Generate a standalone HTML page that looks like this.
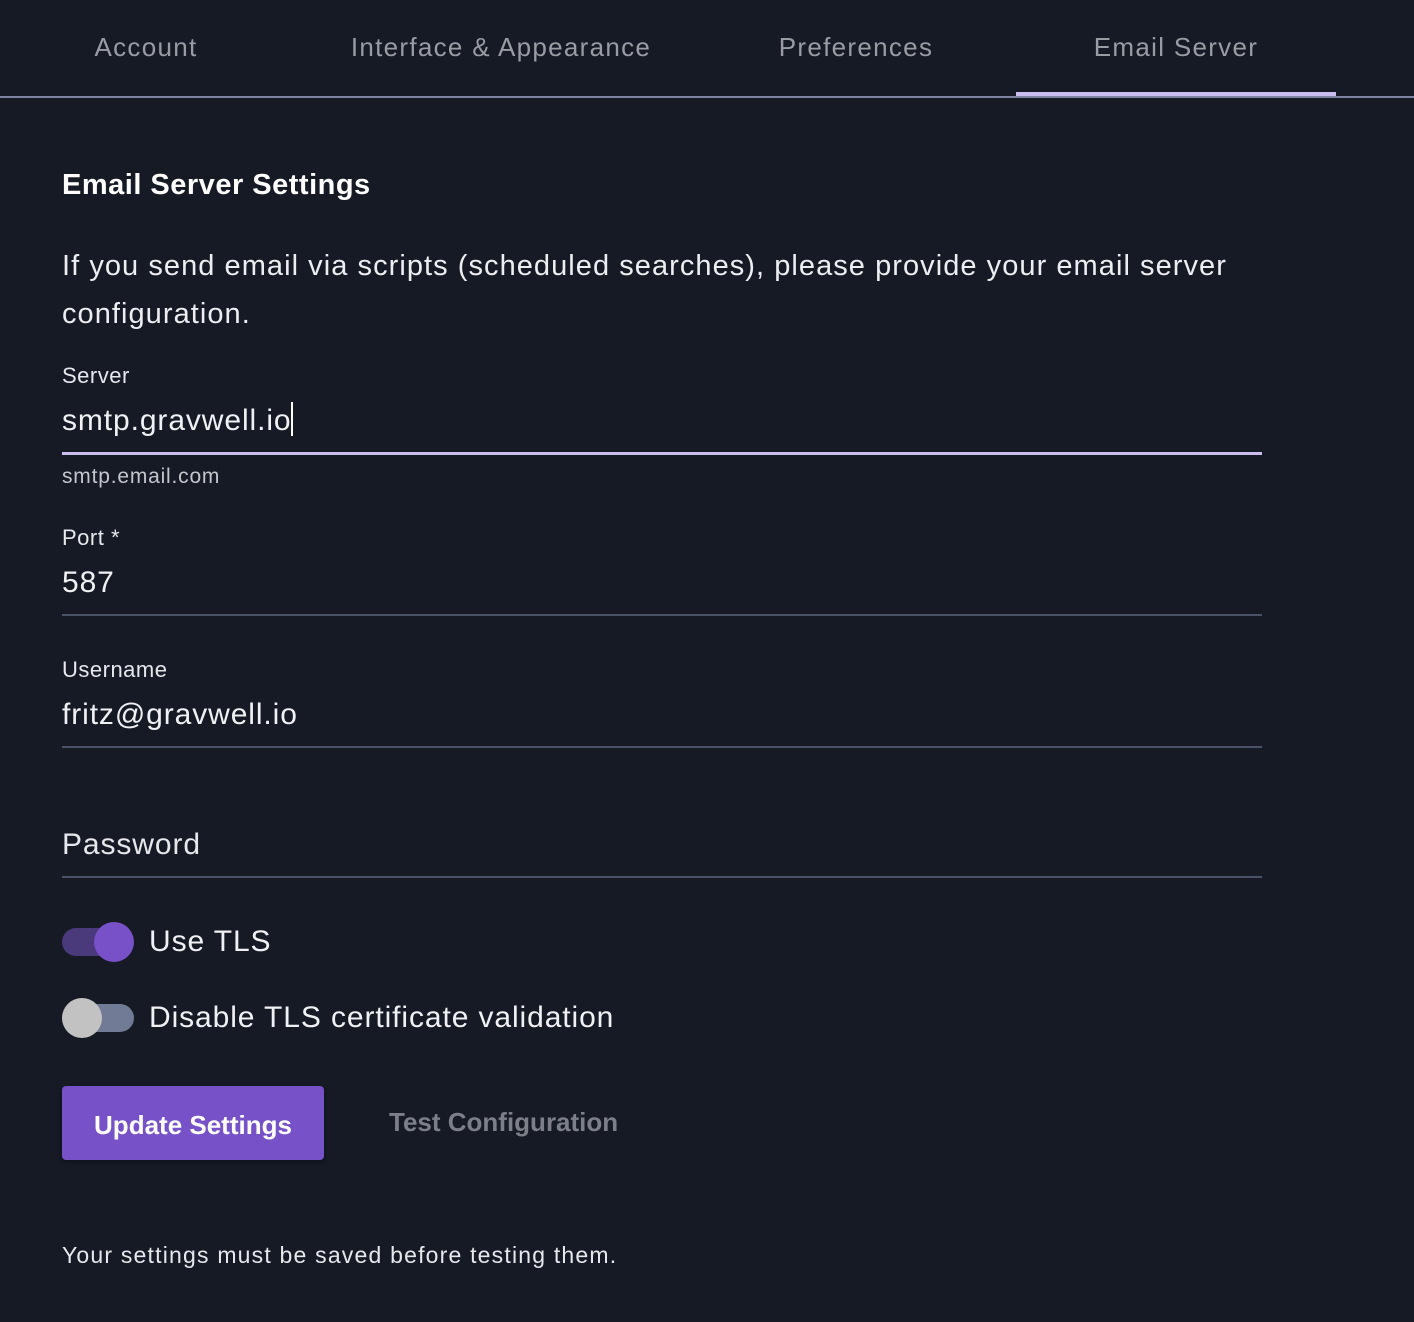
<!DOCTYPE html>
<html><head><meta charset="utf-8"><style>
*{margin:0;padding:0;box-sizing:border-box}
body{width:1414px;height:1322px;background:#151a25;font-family:"Liberation Sans",sans-serif;color:#eceef2;position:relative;overflow:hidden}
.a{position:absolute;white-space:nowrap}
.tab{top:32px;font-size:26px;color:#9a9ca3;transform:translateX(-50%);letter-spacing:1.3px}
.line{position:absolute;left:62px;width:1200px;height:2px;background:#4a5266}
.lab{font-size:22px;color:#e6e8ec;letter-spacing:0.5px}
.val{font-size:30px;color:#f0f1f4;letter-spacing:0.9px}
</style></head><body>
<div class="a tab" style="left:146px">Account</div>
<div class="a tab" style="left:501px">Interface &amp; Appearance</div>
<div class="a tab" style="left:856px">Preferences</div>
<div class="a tab" style="left:1176px">Email Server</div>
<div class="a" style="left:0;top:96px;width:1414px;height:2px;background:#7c85a0"></div>
<div class="a" style="left:1016px;top:92px;width:320px;height:4px;background:#cbbdf0"></div>

<div class="a" style="left:62px;top:169px;font-size:29px;font-weight:bold;color:#fff;letter-spacing:0.5px">Email Server Settings</div>
<div class="a" style="left:62px;top:242px;font-size:29px;line-height:48px;white-space:normal;width:1240px;letter-spacing:1.05px">If you send email via scripts (scheduled searches), please provide your email server configuration.</div>

<div class="a lab" style="left:62px;top:363px">Server</div>
<div class="a val" style="left:62px;top:402px">smtp.gravwell.io<span style="display:inline-block;width:2px;height:34px;background:#fff;vertical-align:-6px"></span></div>
<div class="line" style="top:452px;height:3px;background:#cbbdf0"></div>
<div class="a" style="left:62px;top:465px;font-size:21px;color:#c4c6cc;letter-spacing:0.8px">smtp.email.com</div>

<div class="a lab" style="left:62px;top:525px">Port *</div>
<div class="a val" style="left:62px;top:566px">587</div>
<div class="line" style="top:614px"></div>

<div class="a lab" style="left:62px;top:657px">Username</div>
<div class="a val" style="left:62px;top:698px">fritz@gravwell.io</div>
<div class="line" style="top:746px"></div>

<div class="a val" style="left:62px;top:828px;color:#e6e8ec">Password</div>
<div class="line" style="top:876px"></div>

<div class="a" style="left:62px;top:928px;width:62px;height:28px;border-radius:14px;background:#4a3a7c"></div>
<div class="a" style="left:94px;top:922px;width:40px;height:40px;border-radius:50%;background:#7850c8"></div>
<div class="a val" style="left:149px;top:925px">Use TLS</div>

<div class="a" style="left:62px;top:1004px;width:72px;height:28px;border-radius:14px;background:#727b96"></div>
<div class="a" style="left:62px;top:998px;width:40px;height:40px;border-radius:50%;background:#c2c2c2"></div>
<div class="a val" style="left:149px;top:1001px">Disable TLS certificate validation</div>

<div class="a" style="left:62px;top:1086px;width:262px;height:74px;border-radius:4px;background:#7751c8;box-shadow:0 2px 4px rgba(0,0,0,.4);color:#fff;font-size:26px;font-weight:bold;text-align:center;line-height:78px">Update Settings</div>
<div class="a" style="left:389px;top:1107px;font-size:26px;font-weight:bold;color:#7c7f88">Test Configuration</div>

<div class="a" style="left:62px;top:1242px;font-size:23px;color:#e6e8ec;letter-spacing:1.2px">Your settings must be saved before testing them.</div>
</body></html>
